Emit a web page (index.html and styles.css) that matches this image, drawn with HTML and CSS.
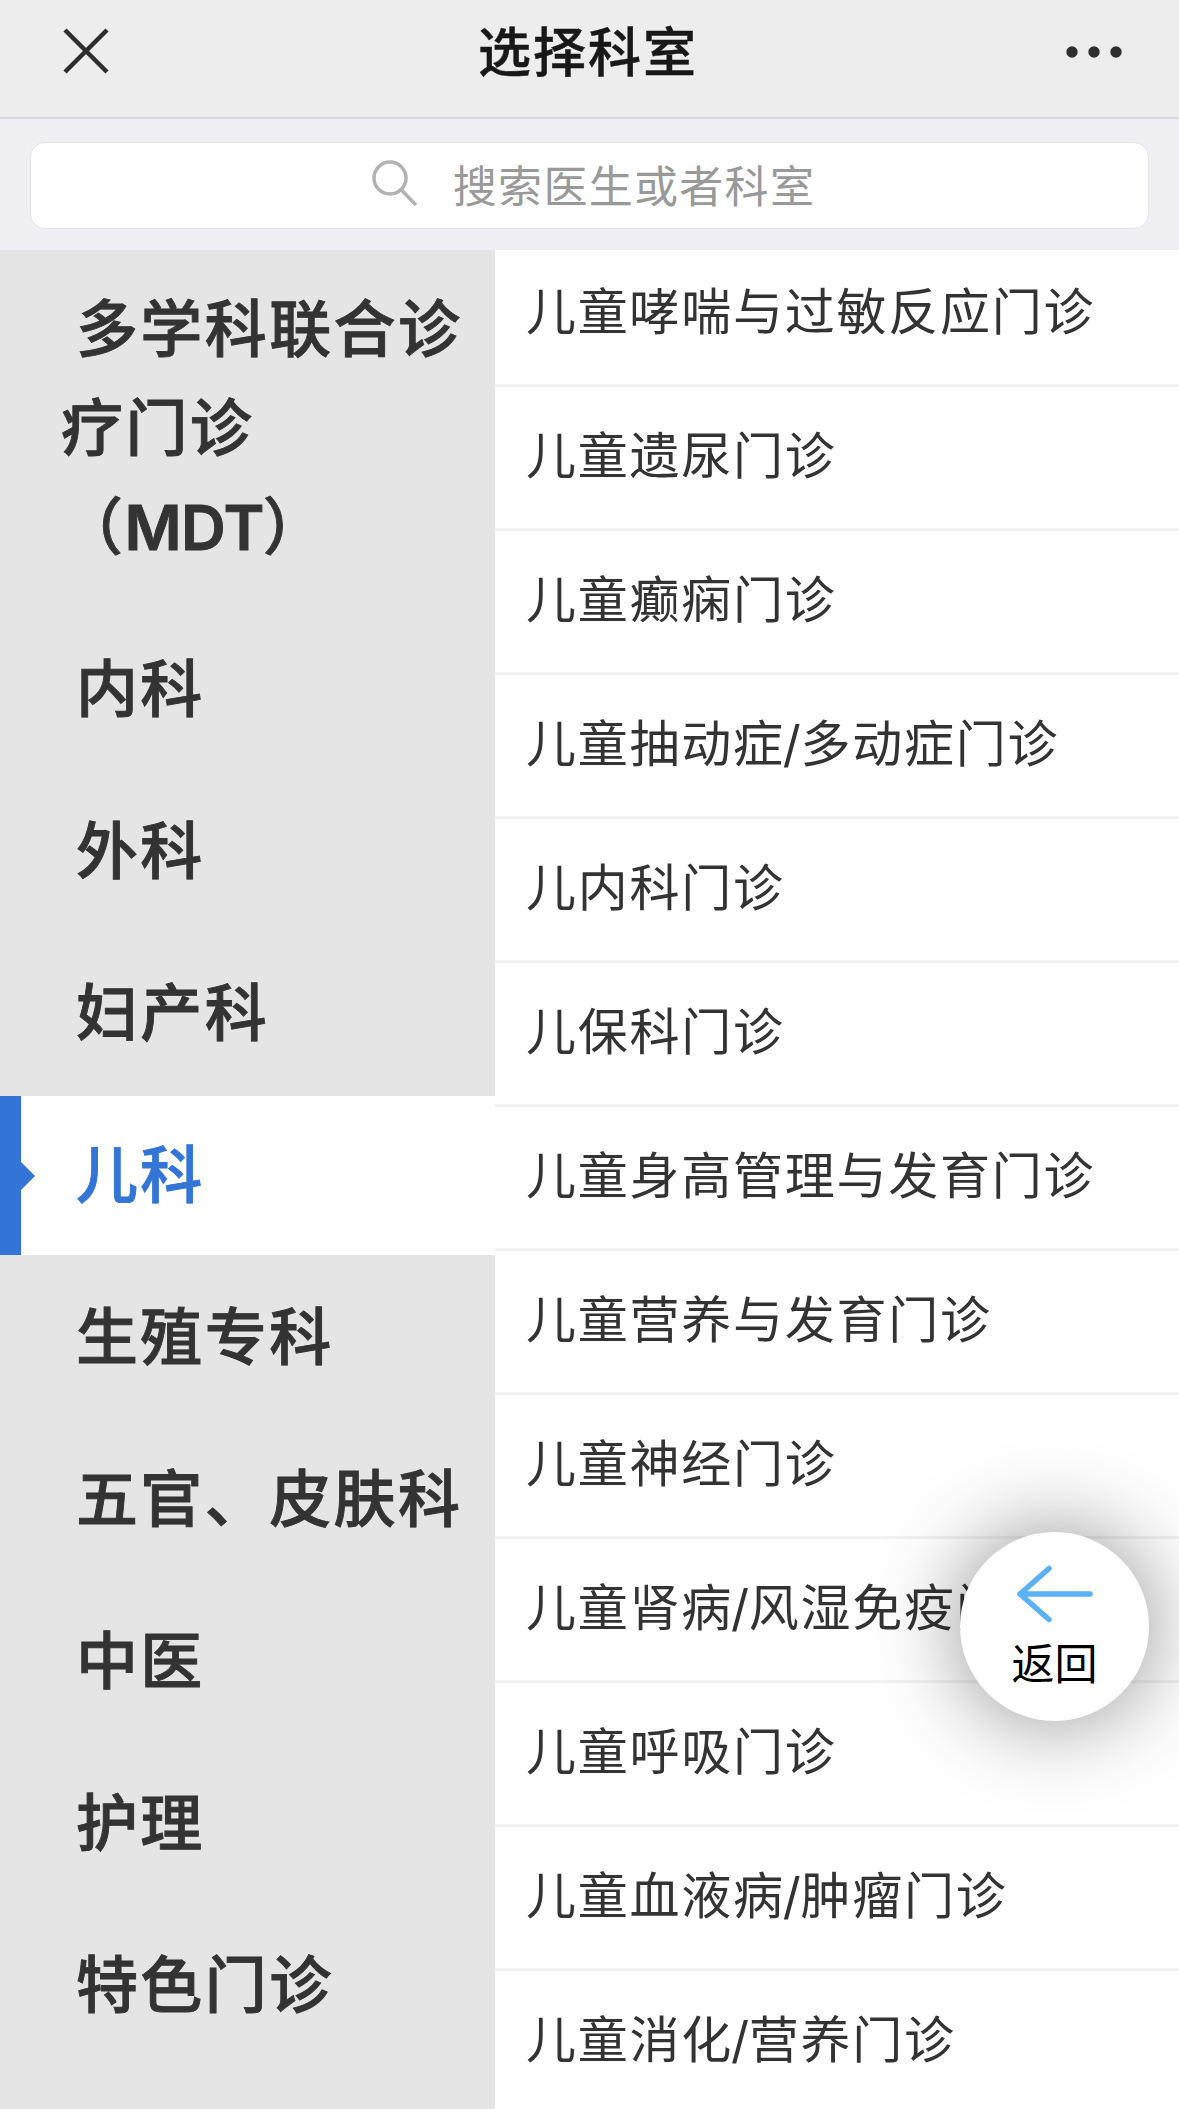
FILE: index.html
```html
<!DOCTYPE html>
<html lang="zh-CN">

<head>
  <title>选择科室</title>
  <meta charset="utf-8" />
  <link rel="stylesheet" href="styles.css">
</head>

<body>
  <div id="page">

    <!-- title bar -->
    <div class="header">
      <svg class="close" viewBox="0 0 46 46"><path d="M2 2L44 44M44 2L2 44"/></svg>
      <h1 class="title">选择科室</h1>
      <svg class="more" viewBox="0 0 58 12"><circle cx="7" cy="6" r="5.7"/><circle cx="29" cy="6" r="5.7"/><circle cx="51" cy="6" r="5.7"/></svg>
    </div>

    <!-- search -->
    <div class="search">
      <div class="search-box">
        <svg class="search-icon" viewBox="0 0 46 46"><circle cx="18" cy="18" r="16"/><path d="M29.5 30L44 45"/></svg>
        <span class="placeholder">搜索医生或者科室</span>
      </div>
    </div>

    <div id="content">
      <div id="left-col">
        <div class="dept">&nbsp;多学科联合诊<br>疗门诊<br>（<span class="latin">MDT</span>）</div>
        <div class="dept">&nbsp;内科</div>
        <div class="dept">&nbsp;外科</div>
        <div class="dept">&nbsp;妇产科</div>
        <div class="dept active">&nbsp;儿科</div>
        <div class="dept">&nbsp;生殖专科</div>
        <div class="dept">&nbsp;五官、皮肤科</div>
        <div class="dept">&nbsp;中医</div>
        <div class="dept">&nbsp;护理</div>
        <div class="dept">&nbsp;特色门诊</div>
      </div>

      <div id="right-col">
        <div class="item">儿童哮喘与过敏反应门诊</div>
        <div class="item">儿童遗尿门诊</div>
        <div class="item">儿童癫痫门诊</div>
        <div class="item">儿童抽动症<span class="slash">/</span>多动症门诊</div>
        <div class="item">儿内科门诊</div>
        <div class="item">儿保科门诊</div>
        <div class="item">儿童身高管理与发育门诊</div>
        <div class="item">儿童营养与发育门诊</div>
        <div class="item">儿童神经门诊</div>
        <div class="item">儿童肾病<span class="slash">/</span>风湿免疫门诊</div>
        <div class="item">儿童呼吸门诊</div>
        <div class="item">儿童血液病<span class="slash">/</span>肿瘤门诊</div>
        <div class="item">儿童消化<span class="slash">/</span>营养门诊</div>
      </div>
    </div>

    <!-- floating back button -->
    <div class="back">
      <svg class="arrow" viewBox="0 0 76 58"><path d="M32 3.5L3 29L32 54.5M3 29H73"/></svg>
      <span class="back-text">返回</span>
    </div>

  </div>
</body>
</html>
```

FILE: styles.css
```css
* {
  margin: 0px;
  padding: 0px;
  box-sizing: border-box;
}

body {
  font-family: Inter, "Noto Sans CJK SC", sans-serif;
  color: #333;
  background: #fff;
}

#page {
  position: relative;
  display: flex;
  flex-direction: column;
  width: 1179px;
  height: 2109px;
  overflow: hidden;
}

svg {
  display: block;
  fill: none;
}

/* title bar */
.header {
  display: flex;
  justify-content: space-between;
  height: 119px;
  padding: 0 56px 0 63px;
  background: #ededed;
  border-bottom: 2px solid #d9d9dd;
}

.close {
  width: 46px;
  height: 46px;
  margin-top: 28px;
  stroke: #2e2e2e;
  stroke-width: 4.5;
}

.title {
  padding-left: 2px;
  font-size: 53px;
  font-weight: 500;
  line-height: 106px;
  letter-spacing: 2px;
  color: #181818;
  -webkit-text-stroke: 0.5px #181818;
}

.more {
  width: 58px;
  height: 12px;
  margin-top: 46px;
  fill: #2e2e2e;
}

/* search */
.search {
  height: 131px;
  padding: 23px 30px 21px;
  background: #efeff4;
}

.search-box {
  display: flex;
  justify-content: center;
  height: 87px;
  padding-left: 3px;
  border: 1px solid #e4e4e7;
  border-radius: 15px;
  background: #fff;
}

.search-icon {
  width: 46px;
  height: 46px;
  margin: 17px 35px 0 5px;
  stroke: #b2b2b2;
  stroke-width: 3.5;
}

.placeholder {
  font-size: 44px;
  line-height: 88px;
  letter-spacing: 1.3px;
  color: #999;
}

/* two columns */
#content {
  display: flex;
  height: 1859px;
  overflow: hidden;
}

#left-col {
  width: 495px;
  background: #e5e5e5;
}

.dept {
  position: relative;
  margin-bottom: 3px;
  padding: 30px 0 30px 61px;
  font-size: 62px;
  font-weight: 500;
  line-height: 99px;
  letter-spacing: 2.4px;
  word-spacing: -4px;
  white-space: nowrap;
  -webkit-text-stroke: 0.9px;
}

.latin {
  font-weight: 600;
  letter-spacing: -0.5px;
  margin: 0 -1px 0 -1px;
}

.dept.active {
  color: #3375d6;
  background: #fff;
  border-left: 21px solid #3375d6;
  padding-left: 40px;
}

.dept.active:before {
  content: "";
  position: absolute;
  left: 0;
  top: 66px;
  border-left: 14px solid #3375d6;
  border-top: 14px solid transparent;
  border-bottom: 14px solid transparent;
}

#right-col {
  flex: 1;
  margin-top: -7px;
}

.item {
  height: 144px;
  padding-left: 31px;
  border-bottom: 3px solid #f2f2f2;
  font-size: 50px;
  line-height: 139px;
  letter-spacing: 1.75px;
  white-space: nowrap;
}

.slash {
  margin: 0 -2px;
}

/* back button */
.back {
  position: absolute;
  left: 960px;
  top: 1532px;
  display: flex;
  flex-direction: column;
  align-items: center;
  width: 189px;
  height: 189px;
  border-radius: 50%;
  background: #fff;
  box-shadow: 0 0 90px rgba(0, 0, 0, 0.45);
}

.arrow {
  width: 76px;
  height: 58px;
  margin-top: 33px;
  stroke: #5bb1f5;
  stroke-width: 5.5;
  stroke-linecap: round;
  stroke-linejoin: round;
}

.back-text {
  font-size: 43px;
  line-height: 60px;
  margin-top: 11px;
  color: #000;
}
```
